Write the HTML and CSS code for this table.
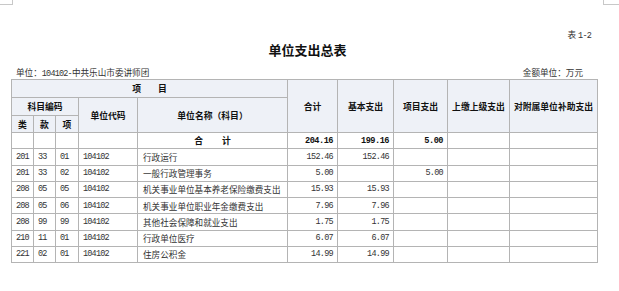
FILE: index.html
```html
<!DOCTYPE html>
<html lang="zh">
<head>
<meta charset="utf-8">
<title>单位支出总表</title>
<link rel="stylesheet" href="styles.css">
</head>
<body>
<div class="page">
  <div class="marks">
    <span class="mark mark-left"></span>
    <span class="mark mark-right"></span>
  </div>
  <div class="tabno">表 <span class="num">1-2</span></div>
  <h1 class="title">单位支出总表</h1>
  <div class="unitrow">
    <span class="unit">单位：<span class="num">104102-</span>中共乐山市委讲师团</span>
    <span class="money">金额单位：万元</span>
  </div>
  <table class="grid">
    <colgroup>
      <col class="c1"><col class="c2"><col class="c3"><col class="c4"><col class="c5">
      <col class="c6"><col class="c7"><col class="c8"><col class="c9"><col class="c10">
    </colgroup>
    <thead>
      <tr class="h1">
        <th colspan="5"><span class="wide">项</span>目</th>
        <th rowspan="3">合计</th>
        <th rowspan="3">基本支出</th>
        <th rowspan="3">项目支出</th>
        <th rowspan="3">上缴上级支出</th>
        <th rowspan="3">对附属单位补助支出</th>
      </tr>
      <tr class="h2">
        <th colspan="3">科目编码</th>
        <th rowspan="2">单位代码</th>
        <th rowspan="2">单位名称（科目）</th>
      </tr>
      <tr class="h3">
        <th>类</th><th>款</th><th>项</th>
      </tr>
    </thead>
    <tbody>
      <tr class="total">
        <td></td><td></td><td></td><td></td>
        <td class="ctr"><span class="wide2">合</span>计</td>
        <td class="n b">204.16</td><td class="n b">199.16</td><td class="n b">5.00</td><td></td><td></td>
      </tr>
      <tr><td class="d">201</td><td class="d">33</td><td class="d">01</td><td class="d">104102</td><td class="t">行政运行</td><td class="n">152.46</td><td class="n">152.46</td><td></td><td></td><td></td></tr>
      <tr><td class="d">201</td><td class="d">33</td><td class="d">02</td><td class="d">104102</td><td class="t">一般行政管理事务</td><td class="n">5.00</td><td></td><td class="n">5.00</td><td></td><td></td></tr>
      <tr><td class="d">208</td><td class="d">05</td><td class="d">05</td><td class="d">104102</td><td class="t">机关事业单位基本养老保险缴费支出</td><td class="n">15.93</td><td class="n">15.93</td><td></td><td></td><td></td></tr>
      <tr><td class="d">208</td><td class="d">05</td><td class="d">06</td><td class="d">104102</td><td class="t">机关事业单位职业年金缴费支出</td><td class="n">7.96</td><td class="n">7.96</td><td></td><td></td><td></td></tr>
      <tr><td class="d">208</td><td class="d">99</td><td class="d">99</td><td class="d">104102</td><td class="t">其他社会保障和就业支出</td><td class="n">1.75</td><td class="n">1.75</td><td></td><td></td><td></td></tr>
      <tr><td class="d">210</td><td class="d">11</td><td class="d">01</td><td class="d">104102</td><td class="t">行政单位医疗</td><td class="n">6.07</td><td class="n">6.07</td><td></td><td></td><td></td></tr>
      <tr><td class="d">221</td><td class="d">02</td><td class="d">01</td><td class="d">104102</td><td class="t">住房公积金</td><td class="n">14.99</td><td class="n">14.99</td><td></td><td></td><td></td></tr>
    </tbody>
  </table>
</div>
</body>
</html>
```

FILE: styles.css
```css
* { box-sizing: border-box; }
html, body { margin: 0; padding: 0; background: #ffffff; }
body {
  width: 619px;
  height: 291px;
  overflow: hidden;
  font-family: "Noto Sans CJK SC", "Noto Sans", sans-serif;
  color: #222;
}
.page { width: 619px; }
.marks {
  display: flex;
  justify-content: space-between;
  height: 5px;
}
.mark { display: block; height: 5px; border-bottom: 1px solid #c8c8c8; }
.mark-left { width: 13px; border-right: 1px solid #c8c8c8; }
.mark-right { width: 16px; border-left: 1px solid #c8c8c8; }
.num {
  font-family: "Liberation Mono", monospace;
  font-size: 8.5px;
  letter-spacing: -0.8px;
}
.tabno {
  margin-top: 23px;
  height: 12px;
  line-height: 12px;
  font-size: 8.6px;
  text-align: right;
  padding-right: 28px;
  color: #333;
}
.title {
  margin: 2px 0 0 0;
  height: 16px;
  line-height: 16px;
  font-size: 13px;
  font-weight: bold;
  text-align: center;
  color: #111;
  padding-right: 4px;
}
.unitrow {
  margin-top: 8px;
  height: 12px;
  line-height: 12px;
  display: flex;
  justify-content: space-between;
  padding-left: 16px;
  padding-right: 36px;
  font-size: 8.6px;
  color: #333;
}
.grid {
  margin: 1px 0 0 11px;
  border-collapse: collapse;
  table-layout: fixed;
  width: 587px;
}
.c1 { width: 22px; } .c2 { width: 22px; } .c3 { width: 23px; } .c4 { width: 59px; }
.c5 { width: 150px; } .c6 { width: 50px; } .c7 { width: 56px; } .c8 { width: 54px; }
.c9 { width: 62px; } .c10 { width: 88px; }
.grid th, .grid td {
  border: 1px solid #b4b4b4;
  padding: 0;
  overflow: hidden;
  white-space: nowrap;
}
.grid th {
  background: #eef1f7;
  font-size: 8.8px;
  font-weight: bold;
  color: #111;
  text-align: center;
  vertical-align: middle;
}
.h1 th { height: 18px; }
.h2 th { height: 18px; }
.h3 th { height: 17px; }
.wide { margin-right: 17px; }
.wide2 { margin-right: 19px; }
.grid td {
  height: 16.25px;
  font-size: 8.6px;
  color: #333;
  vertical-align: middle;
  line-height: 12px;
}
.grid td.ctr { text-align: center; font-weight: bold; color: #111; font-size: 8.8px; }
.grid td.d {
  padding-left: 4px;
  font-family: "Liberation Mono", monospace;
  font-size: 8.5px;
  letter-spacing: -0.8px;
}
.grid td.t { padding-left: 5px; }
.grid td.n {
  text-align: right;
  padding-right: 4px;
  font-family: "Liberation Mono", monospace;
  font-size: 8.5px;
  letter-spacing: -0.7px;
}
.grid td.n.b { font-weight: bold; color: #111; font-size: 8.6px; letter-spacing: -0.5px; }
```
